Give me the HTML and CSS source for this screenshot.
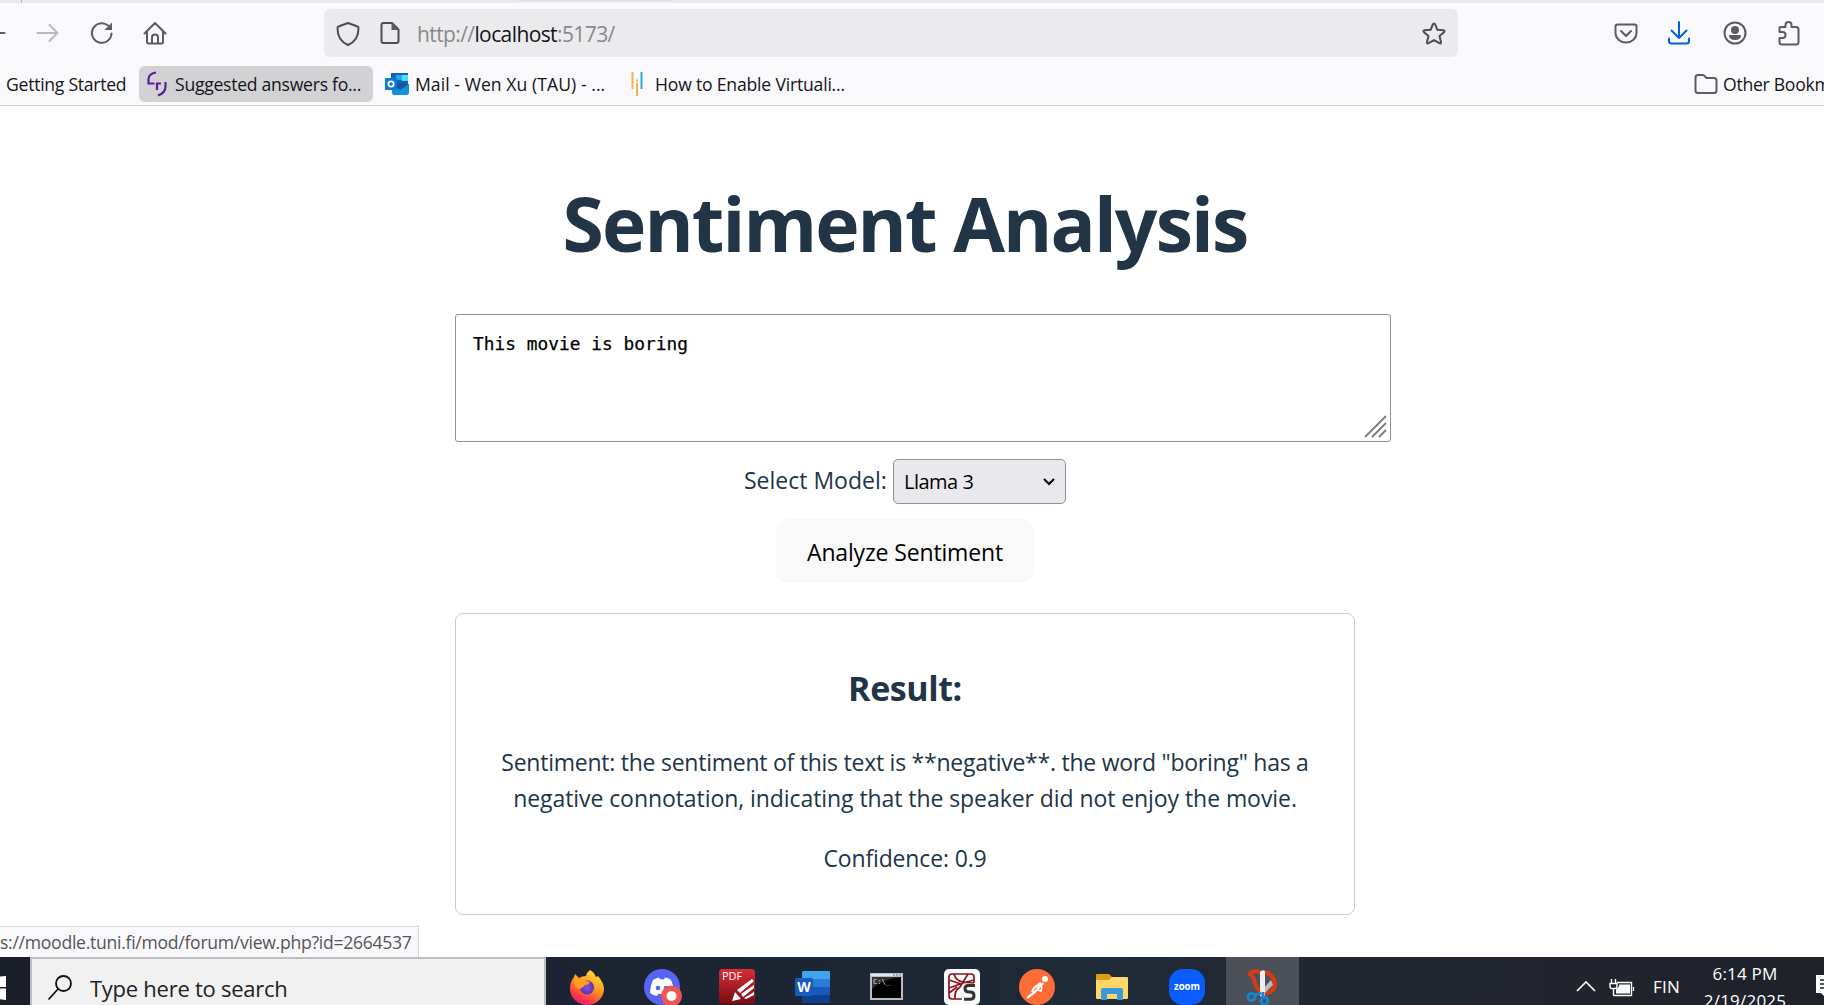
FILE: index.html
```html
<!DOCTYPE html>
<html lang="en">
<head>
<meta charset="utf-8">
<title>Sentiment Analysis</title>
<link rel="stylesheet" href="styles.css">
</head>
<body>
<div class="tabstrip"><div class="tab-divider"></div><div class="tab-shadow"></div></div>
<nav class="toolbar">
  <svg class="icon back" width="24" height="24" viewBox="0 0 24 24"><path d="M-15 12H4.500" /></svg>
  <svg class="icon forward" width="24" height="24" viewBox="0 0 24 24"><path d="M1.500 12H21.500M13.500 4l8 8-8 8"/></svg>
  <svg class="icon reload" width="24" height="24" viewBox="0 0 24 24"><path d="M21.500 12.500A9.800 9.800 0 1 1 18 4.500"/><path class="solid" d="M22 1.500V9h-7.500z"/></svg>
  <svg class="icon home" width="24" height="24" viewBox="0 0 24 24"><path d="M1.500 12.500 12 2l10.500 10.500M4 10.500V21q0 1.500 1.500 1.500h13Q20 22.500 20 21V10.500M9 22.500V16q0-2.500 3-2.500t3 2.500v6.500"/></svg>
  <div class="urlbar">
    <svg class="icon shield" width="24" height="26" viewBox="0 0 24 26"><path d="M12 2 21.500 5.500q1 .4 1 1.500C22.500 15 19.500 21 12 24 4.500 21 1.500 15 1.500 7q0-1.100 1-1.500z"/></svg>
    <svg class="icon page" width="20" height="24" viewBox="0 0 20 24"><path d="M3.500 2H12l6.500 6.500V20q0 2-2 2h-13q-2 0-2-2V4q0-2 2-2z"/><path class="solid" d="M11.500 1.500v7.500H19z"/></svg>
    <span class="url">http://<b>localhost</b>:5173/</span>
    <svg class="icon star" width="26" height="26" viewBox="0 0 26 26"><path d="M13 2.500q.8 0 1.200 1l2.200 5.300 5.900.5q2.200.3.700 1.900l-4.500 3.900 1.500 5.900q.3 2.100-1.600 1.200L13 19.100l-5.400 3.100q-1.900.9-1.600-1.200l1.500-5.900L3 11.200q-1.500-1.600.7-1.900l5.900-.5 2.200-5.300q.4-1 1.200-1z"/></svg>
  </div>
  <svg class="icon pocket" width="24" height="24" viewBox="0 0 24 24"><path d="M3.500 3.500h17q2 0 2 2V12a10.500 9.500 0 0 1-21 0V5.500q0-2 2-2zM7 10l5 5 5-5"/></svg>
  <svg class="icon download" width="24" height="26" viewBox="0 0 24 26"><path d="M12 2v16M4.500 10.500 12 18l7.500-7.500M2 18.500V21q0 2.500 2.500 2.500h15Q22 23.500 22 21v-2.500"/></svg>
  <svg class="icon account" width="24" height="24" viewBox="0 0 24 24"><circle cx="12" cy="12" r="10.500"/><circle class="fill" cx="12" cy="9" r="4"/><path class="fill" d="M6 14h12q0 5-6 5t-6-5z"/></svg>
  <svg class="icon puzzle" width="24" height="26" viewBox="0 0 24 26"><path d="M3.500 7H8.500V5q0-3 3-3t3 3v2H19q2.500 0 2.500 2.500V22q0 2.500-2.500 2.500H5Q2.500 24.500 2.500 22v-4h3q3 0 3-3t-3-3h-3V8q0-1 1-1z"/></svg>
</nav>
<div class="bookmarks">
  <span class="bm first">Getting Started</span>
  <div class="bm-active">
    <svg width="20" height="26" viewBox="0 0 20 26"><path d="M9 1.500Q1.500 3 1.500 8v4.500h6M10 19v-6.500h4M18.500 11v4.500Q18.500 22 11 24.500" fill="none" stroke="#5a1e96" stroke-width="2.200"/></svg>
    <span class="bm">Suggested answers fo...</span>
  </div>
  <svg class="outlook" width="24" height="24" viewBox="0 0 24 24"><path fill="#1066b5" d="M6 1h17v12H6z"/><path fill="#28a8ea" d="M11 3h6v5h-6z"/><path fill="#50d9ff" d="M17 3h6v6h-6z"/><path fill="#0364b8" d="M6 8h11v7H6z"/><path fill="#1490df" d="M7 20v-7l17-1v9q0 2-2 2H9q-2 0-2-3z"/><path fill="#0f5a9f" d="m24 12-9 6-8-5 8-2z"/><rect fill="#0f78d4" y="6" width="12" height="12" rx="1"/><circle cx="6" cy="12" r="2.700" fill="none" stroke="#fff" stroke-width="1.700"/></svg>
  <span class="bm mail">Mail - Wen Xu (TAU) - ...</span>
  <svg class="bars" width="12" height="26" viewBox="0 0 12 26"><path d="M1.500 1v17M6 12v13" stroke="#f7b055" stroke-width="2"/><path d="M6 8.500v2" stroke="#f7b055" stroke-width="2"/><path d="M10.500 1v17" stroke="#2aa7dc" stroke-width="2"/></svg>
  <span class="bm howto">How to Enable Virtuali...</span>
  <svg class="icon folder" width="24" height="22" viewBox="0 0 24 22"><path d="M4 2h4.500q1.500 0 2.500 1.500L12.500 5H20q2.500 0 2.500 2.500V17.500q0 2.500-2.500 2.500H4q-2.500 0-2.500-2.500v-13Q1.500 2 4 2z"/></svg>
  <span class="bm other">Other Bookmarks</span>
</div>
<main class="content">
  <h1>Sentiment Analysis</h1>
  <div class="textarea">This movie is boring
    <svg class="grip" width="24" height="24" viewBox="0 0 24 24"><path d="M1 23 22 2M8 23 22 9M15 23l7-7"/></svg></div>
  <div class="model"><span class="label">Select Model:</span>
    <div class="select"><span>Llama 3</span><svg width="14" height="10" viewBox="0 0 14 10"><path d="m2 2 5 5 5-5"/></svg></div></div>
  <div class="button">Analyze Sentiment</div>
  <section class="result">
    <h2>Result:</h2>
    <p><span class="line-first">Sentiment: the sentiment of this text is **negative**. the word "boring" has a</span><br><span class="line-second">negative connotation, indicating that the speaker did not enjoy the movie.</span></p>
    <p class="conf">Confidence: 0.9</p>
  </section>
</main>
<div class="status">s://moodle.tuni.fi/mod/forum/view.php?id=2664537</div>
<footer class="taskbar">
  <div class="start"><svg width="30" height="48" viewBox="0 0 30 48"><path fill="#fff" d="M0 19.500 6 19v11H0zM0 31.500h6V43l-6-.7z"/></svg></div>
  <div class="search"><svg width="26" height="28" viewBox="0 0 26 28"><circle cx="16.500" cy="8.500" r="7.500"/><path d="M11 14 1.500 24.500"/></svg><span>Type here to search</span></div>
  <div class="apps">
    <div class="app"><svg width="36" height="38" viewBox="0 0 36 38"><defs><linearGradient id="ff" x1=".8" y1="0" x2=".3" y2="1"><stop offset="0" stop-color="#ffe43c"/><stop offset=".45" stop-color="#ff9a1f"/><stop offset=".8" stop-color="#ff3b47"/><stop offset="1" stop-color="#e9147c"/></linearGradient><radialGradient id="fp"><stop offset="0" stop-color="#8a4de8"/><stop offset="1" stop-color="#5b34b4"/></radialGradient></defs><path fill="url(#ff)" d="M21 2q4 2 6 7l2-1q6 7 6 13a17 16 0 0 1-34 0Q1 14 5 9l1-3 4 4q3-2 7-2 1-4 4-6z"/><circle cx="18" cy="19.500" r="7" fill="url(#fp)"/><path fill="#ffa020" d="M5 12q5-4 12 1l4 1q-1 3-5 3-3 4-7 4-4-4-4-9z"/></svg></div>
    <div class="app"><svg width="36" height="38" viewBox="0 0 36 38"><circle cx="18" cy="19" r="18" fill="#5865f2"/><path fill="#fff" d="M9 12q4-2.500 6-2.500l1 2q2-.5 4 0l1-2q3 0 6 2.500 3 6 3 13-3 2.500-7 3l-1.500-2.500q-3.500 1-7 0L13 28q-4-.5-7-3 0-7 3-13z"/><circle cx="14" cy="20" r="2.300" fill="#5865f2"/><circle cx="22" cy="20" r="2.300" fill="#5865f2"/><circle cx="27.500" cy="28" r="10.500" fill="#ee5654"/><circle cx="27.500" cy="28" r="5" fill="#fff"/></svg></div>
    <div class="app"><svg width="36" height="38" viewBox="0 0 36 38"><defs><linearGradient id="pd" x2="0" y2="1"><stop offset="0" stop-color="#d92d37"/><stop offset="1" stop-color="#790b12"/></linearGradient></defs><rect y="1" width="36" height="35" rx="3.500" fill="url(#pd)"/><text x="3" y="12" class="pdf">PDF</text><path fill="#fff" d="m13 33 3-9 6 7zM18 22 33 11l2 2-14 12zM22 26l13-9v3L24 29zM25 30l10-6v3l-8 4z"/></svg></div>
    <div class="app"><svg width="36" height="38" viewBox="0 0 36 38"><path fill="#41a5ee" d="M9 3h26q1 0 1 1v7H8V4z"/><path fill="#2b7cd3" d="M8 11h28v8H8z"/><path fill="#185abd" d="M8 19h28v8H8z"/><path fill="#103f91" d="M8 27h28v7q0 1-1 1H9q-1 0-1-1z"/><rect x="1" y="10" width="18" height="18" rx="1.500" fill="#185abd"/><text x="10" y="23.500" text-anchor="middle" class="word">W</text></svg></div>
    <div class="app"><svg width="34" height="38" viewBox="0 0 34 38"><path fill="#b8bdc4" d="M0 5h33v27H0z"/><path fill="#e4e8ee" d="M1 6h31v2H1z"/><path d="M24 6v2M27 6v2M30 6v2" stroke="#4b68a8"/><path d="M2 9h29v21H2z"/><path fill="#333" d="M2 9h29Q12 11 2 21z"/><text x="3" y="16" class="cmd">C:\_</text></svg></div>
    <div class="app"><svg width="36" height="38" viewBox="0 0 36 38"><rect y="1" width="36" height="36" rx="5" fill="#fafafa"/><g fill="none" stroke="#8c1420" stroke-width="1.700"><path d="M30 15V9q0-3-3-3H8Q5 6 5 9v19q0 3 3 3h10"/><path d="M5 20 19 15 30 12M10 6q2 7 9 8l11 1M11 31q-1-8 5-12L24 6M5 12l12 4M5 25l8-6"/></g><path fill="none" stroke="#333" stroke-width="3" d="M31 17.500H24q-3 0-3 3.300t4 3.300h1q4 0 4 3.600T26 31.300h-6"/></svg></div>
    <div class="app"><svg width="36" height="38" viewBox="0 0 36 38"><circle cx="18" cy="19" r="18" fill="#ff6c37"/><circle cx="26" cy="11" r="3" fill="#fff"/><path d="m24 15-8 9-8 6M22 15l-7 5-2 4" fill="none" stroke="#fff" stroke-width="2.200"/><path d="m23 18-1 5-3-1" fill="none" stroke="#fff" stroke-width="1.400"/></svg></div>
    <div class="app"><svg width="34" height="38" viewBox="0 0 34 38"><path fill="#e09c14" d="M1 7q0-1 1-1h12l3 3v5H1z"/><path fill="#ffd768" d="M1 12h13l3-3h15q1 0 1 1v20q0 1-1 1H2q-1 0-1-1z"/><path fill="#3e97dd" d="M6 32V22q0-2 2-2h18q2 0 2 2v10h-6v-6H12v6z"/></svg></div>
    <div class="app"><svg width="36" height="38" viewBox="0 0 36 38"><rect y="1" width="36" height="36" rx="14" fill="#0b5cff"/><text x="18" y="22" text-anchor="middle" class="zoom" textLength="26" lengthAdjust="spacingAndGlyphs">zoom</text></svg></div>
    <div class="app active"><svg width="32" height="38" viewBox="0 0 32 38"><path d="M14 4Q7 2 4 6q4 3 5 9 4 12 13 10 9-3 6-13-2-6-9-8" fill="none" stroke="#d83b10" stroke-width="4"/><path fill="#bbb" d="m25 12 2 5-12 12-2-4z"/><path fill="#eee" d="M14 4q2-3 5-1v25h-5z"/><g fill="none" stroke="#1583d0" stroke-width="3"><circle cx="5.500" cy="29" r="3.500"/><circle cx="18.500" cy="33" r="3.500"/><path d="m8 27 7-2M17 29v-5"/></g></svg></div>
  </div>
  <div class="tray">
    <svg class="chev" width="20" height="12" viewBox="0 0 20 12"><path d="m1 11 9-9 9 9"/></svg>
    <svg class="batt" width="26" height="18" viewBox="0 0 26 18"><path d="M2.500 0v4M6.500 0v4M1 4.500h7v3q0 2-2 2H3q-2 0-2-2zM4.500 10v6.500M8 3.500h14.500v13H4.500M24.500 8v4"/><path class="cell" d="M10 5.500h11v9H7v-4l3-3z"/></svg>
    <span class="fin">FIN</span>
    <div class="clock"><span>6:14 PM</span><span>2/19/2025</span></div>
    <svg width="8" height="48" viewBox="0 0 8 48"><path fill="#fff" d="M0 18h8v21l-3-3H0z"/><path d="M4 23h4M4 27h4M4 31h4" stroke="#222" stroke-width="1.500"/></svg>
  </div>
</footer>
</body>
</html>
```
FILE: styles.css
```css
* { box-sizing: border-box; }
body { margin: 0; width: 1824px; height: 1005px; overflow: hidden; position: relative; background: #fff; color: #213547; font-family: "Open Sans", "Noto Sans", sans-serif; display: flex; flex-direction: column; white-space: nowrap; }
svg { display: block; flex: none; overflow: visible; }

/* Browser chrome */
.tabstrip { height: 3px; background: #eaeaed; display: flex; flex: none; }
.tab-divider { width: 1px; margin-left: 21px; background: #b8b8bc; }
.tab-shadow { width: 152px; height: 1px; margin-left: 497px; background: #dcdce0; }
.toolbar { height: 54px; flex: none; display: flex; align-items: flex-start; background: #f9f9fb; padding-top: 6px; }
.icon { fill: none; stroke: #5b5b66; stroke-width: 2; stroke-linecap: round; stroke-linejoin: round; }
.icon .solid, .icon .fill { fill: #5b5b66; stroke: none; }
.toolbar > .icon { margin-top: 12px; }
.forward { margin-left: 12px; stroke: #b9b9be; }
.reload { margin-left: 30px; }
.home { margin-left: 29px; }
.urlbar { margin-left: 157px; width: 1134px; height: 48px; background: #ebebed; border-radius: 6px; display: flex; align-items: center; padding: 0 11px 0 12px; }
.urlbar .icon { stroke: #4c4c52; }
.page { margin-left: 20px; }
.url { margin: 2px 0 0 17px; font-size: 21px; letter-spacing: -.6px; color: #88888c; line-height: 30px; }
.url b { font-weight: 400; color: #15141a; }
.star { margin-left: auto; }
.urlbar .star, .urlbar .shield { margin-top: 1px; }
.pocket { margin-left: 156px; }
.download { margin-left: 29px; stroke: #0061e0; }
.toolbar > .download { margin-top: 11px; }
.account { margin-left: 32px; }
.puzzle { margin-left: 30px; }
.toolbar > .puzzle { margin-top: 11px; }

.bookmarks { height: 49px; flex: none; background: #f9f9fb; border-bottom: 1px solid #ccccce; display: flex; align-items: center; padding: 6px 0 0 6px; }
.bm { font-size: 17.6px; letter-spacing: -.27px; color: #15141a; flex: none; line-height: 26px; }
.first { width: 120px; margin-right: 13px; }
.bm-active { width: 234px; height: 36px; flex: none; background: #d2d2d4; border-radius: 6px; display: flex; align-items: center; padding-left: 8px; gap: 8px; }
.outlook { margin-left: 12px; }
.mail { width: 190px; margin-left: 6px; letter-spacing: .05px; }
.bars { margin-left: 26px; }
.howto { margin-left: 12px; width: 190px; letter-spacing: -.2px; }
.folder { margin-left: 849px; }
.other { margin-left: 5px; }

/* Page */
.content { flex: none; height: 851px; display: flex; flex-direction: column; align-items: flex-start; padding-left: 455px; }
h1 { width: 900px; margin: 64px 0 0; text-align: center; font-size: 75px; letter-spacing: -1.9px; line-height: 106px; font-weight: 700; }
.textarea { width: 936px; height: 128px; margin-top: 38px; border: 1px solid #8f8f9d; border-radius: 3px; padding: 17px; color: #000; font: 17.8px/24px "DejaVu Sans Mono", monospace; letter-spacing: .05px; -webkit-text-stroke: .25px #000; position: relative; }
.grip { position: absolute; right: 2px; bottom: 3px; fill: none; stroke: #7c7c80; stroke-width: 1.8; }
.model { margin: 17px 0 0 289px; display: flex; align-items: center; height: 45px; font-size: 23px; }
.label { width: 143px; padding-bottom: 3px; }
.select { margin-left: 6px; width: 173px; height: 45px; border: 1px solid #8f8f9d; border-radius: 5px; background: #e9e9ed; color: #000; font-size: 20px; letter-spacing: -.5px; display: flex; align-items: center; justify-content: space-between; padding: 0 9px 0 10px; }
.select svg { fill: none; stroke: #000; stroke-width: 2; }
.button { margin: 15px 0 0 321px; width: 258px; height: 64px; border-radius: 12px; background: #f9f9f9; color: #000; font-size: 23px; letter-spacing: -.15px; display: flex; align-items: center; justify-content: center; padding-top: 2px; }
.result { width: 900px; height: 302px; margin-top: 30px; border: 1px solid #ccc; border-radius: 8px; text-align: center; }
h2 { margin: 47px 0 0; font-size: 34px; letter-spacing: -.4px; line-height: 54px; }
p { margin: 29px 0 0; font-size: 23px; line-height: 36px; }
.line-first { letter-spacing: -.25px; }
.line-second { letter-spacing: -.07px; }
.conf { margin-top: 24px; letter-spacing: -.15px; }
.status { position: absolute; left: 0; top: 926px; width: 419px; height: 31px; background: #f9f9fb; border: 1px solid #d6d6da; border-width: 1px 1px 0 0; color: #55555a; font-size: 17.6px; letter-spacing: -.28px; line-height: 31px; overflow: hidden; }

/* Taskbar */
.taskbar { height: 48px; flex: none; display: flex; background: linear-gradient(90deg, #1a1e28, #1b2430 30%, #1f2a37 60%, #22262f 80%, #20222a); }
.start { width: 30px; }
.search { width: 516px; border: 2px solid #bfbfbf; border-bottom: 0; background: #f1f1f1; color: #222; font-size: 22px; letter-spacing: -.26px; display: flex; padding: 14px 0 0 15px; gap: 17px; line-height: 30px; }
.search svg { fill: none; stroke: #111; stroke-width: 1.8; margin-top: 2px; }
.apps { display: flex; gap: 2px; margin-left: 5px; }
.app { width: 73px; height: 48px; display: flex; justify-content: center; padding: 11px 2px 0 0; }
.app.active { background: #4c5058; }
.pdf { font: 11px "Open Sans", sans-serif; fill: #fff; }
.word { font: 700 14px "Open Sans", sans-serif; fill: #fff; }
.cmd { font: 7px "DejaVu Sans Mono", monospace; fill: #ddd; }
.zoom { font: 700 10px "Open Sans", sans-serif; fill: #fff; }
.tray { display: flex; margin-left: auto; color: #fff; font-size: 17px; letter-spacing: .2px; }
.chev { margin: 23px 13px 0 0; fill: none; stroke: #fff; stroke-width: 1.6; }
.batt { margin-top: 22px; fill: none; stroke: #fff; stroke-width: 1.4; }
.batt .cell { fill: #fff; stroke: none; }
.fin { margin: 18px 0 0 18px; line-height: 24px; width: 25px; }
.clock { display: flex; flex-direction: column; align-items: center; width: 84px; margin: 3px 29px 0 25px; line-height: 27px; }
```
